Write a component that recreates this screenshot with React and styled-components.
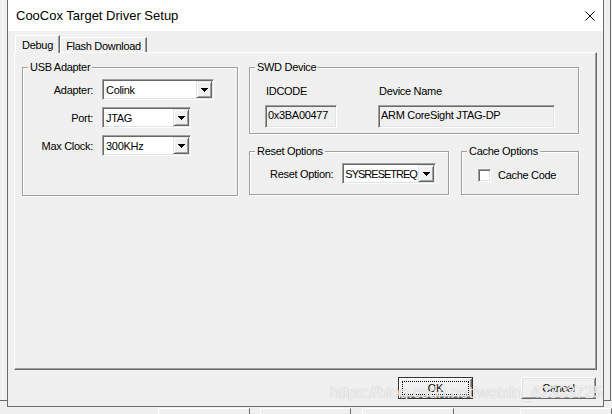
import React from "react";
import styled, { createGlobalStyle } from "styled-components";

const Global = createGlobalStyle`
  html, body { margin: 0; padding: 0; background: #f0f0f0; overflow: hidden; }
  body { font-family: "Liberation Sans", Arial, sans-serif; font-size: 11px; color: #000; }
  * { box-sizing: border-box; }
`;

const Screen = styled.div`
  position: relative;
  width: 612px;
  height: 414px;
  overflow: hidden;
  background: #f0f0f0;
`;

const BackWindow = styled.div`
  position: absolute;
  left: -10px;
  top: -10px;
  width: 621px;
  height: 411px;
  border-right: 1px solid #696969;
  border-bottom: 1px solid #696969;
  background: linear-gradient(to right, transparent 12px, #fbfbfb 12px, #fbfbfb 13px, transparent 13px), #f0f0f0;
`;

const BackBar = styled.div`
  position: absolute;
  left: 0;
  top: 408px;
  display: flex;
`;

const BackSlot = styled.div`
  width: ${(p) => p.$w}px;
  margin-left: ${(p) => p.$ml}px;
  height: 10px;
  background: #f0f0f0;
  border-top: 1px solid #fff;
  border-left: 1px solid #fff;
  border-right: 1px solid #696969;
`;

const Dialog = styled.div`
  position: absolute;
  left: 7px;
  top: -1px;
  width: 597px;
  height: 408px;
  border: 1px solid #6c6c6c;
  background: #f0f0f0;
  display: flex;
  flex-direction: column;
  z-index: 1;
`;

const TitleBar = styled.div`
  height: 31px;
  flex: none;
  background: #fff;
  display: flex;
  align-items: center;
  justify-content: space-between;
  padding: 0 8px;
`;

const Title = styled.span`
  font-size: 13px;
  line-height: 31px;
  color: #000;
`;

const CloseIcon = styled.svg`
  display: block;
  width: 10px;
  height: 10px;
`;

const Body = styled.div`
  flex: 1;
  display: flex;
  flex-direction: column;
  padding: 4px 6px 0 6px;
  letter-spacing: -0.3px;
`;

const TabStrip = styled.div`
  display: flex;
  align-items: flex-end;
  height: 17px;
  padding-left: 1px;
`;

const Tab = styled.div`
  position: relative;
  z-index: ${(p) => (p.$active ? 1 : 0)};
  width: ${(p) => p.$w}px;
  height: ${(p) => (p.$active ? 18 : 15)}px;
  margin-bottom: ${(p) => (p.$active ? -1 : 0)}px;
  padding-top: ${(p) => (p.$active ? 3 : 2)}px;
  border-top: 1px solid #fff;
  border-left: 1px solid #fff;
  border-right: 1px solid #696969;
  box-shadow: inset -1px 0 #a0a0a0;
  background: #f0f0f0;
  line-height: 13px;
  text-align: center;
`;

const TabPanel = styled.div`
  height: 318px;
  flex: none;
  border: 1px solid;
  border-color: #fff #696969 #696969 #fff;
  box-shadow: inset -1px -1px #a0a0a0;
  padding: 14px 0 0 7px;
`;

const Columns = styled.div`
  display: grid;
  grid-template-columns: 216px 330px;
  column-gap: 11px;
  align-items: start;
`;

const RightColumn = styled.div`
  display: flex;
  flex-direction: column;
  gap: 17px;
`;

const OptionRow = styled.div`
  display: flex;
  gap: 12px;
`;

const Group = styled.div`
  position: relative;
  width: ${(p) => p.$w}px;
  height: ${(p) => p.$h}px;
  border: 1px solid #a0a0a0;
  box-shadow: inset 1px 1px #fff, 1px 1px 0 #fff;
`;

const GroupTitle = styled.span`
  position: absolute;
  top: -7px;
  left: 5px;
  padding: 0 2px;
  line-height: 13px;
  background: #f0f0f0;
  white-space: nowrap;
`;

const FormGrid = styled.div`
  display: grid;
  grid-template-columns: 70px auto;
  column-gap: 9px;
  row-gap: 7px;
  justify-items: start;
  padding-top: 11px;
`;

const Label = styled.span`
  justify-self: end;
  height: 21px;
  line-height: 23px;
  white-space: nowrap;
`;

const Combo = styled.div`
  display: flex;
  width: ${(p) => p.$w}px;
  height: 21px;
  padding: 1px;
  background: #fff;
  border: 1px solid;
  border-color: #a0a0a0 #fff #fff #a0a0a0;
  box-shadow: inset 1px 1px #696969, inset -1px -1px #e3e3e3;
`;

const ComboValue = styled.span`
  flex: 1;
  min-width: 0;
  height: 17px;
  line-height: 19px;
  padding-left: ${(p) => (p.$tight ? 1 : 2)}px;
  letter-spacing: ${(p) => (p.$tight ? "-1px" : "inherit")};
  overflow: hidden;
  white-space: nowrap;
`;

const DropButton = styled.div`
  width: 16px;
  height: 17px;
  flex: none;
  display: flex;
  align-items: center;
  justify-content: center;
  background: #f0f0f0;
  border: 1px solid;
  border-color: #e3e3e3 #696969 #696969 #e3e3e3;
  box-shadow: inset 1px 1px #fff, inset -1px -1px #a0a0a0;
`;

const Arrow = styled.svg`
  display: block;
  width: 7px;
  height: 4px;
  margin-top: 1px;
  shape-rendering: crispEdges;
`;

const SwdGrid = styled.div`
  display: grid;
  grid-template-columns: 72px 177px;
  column-gap: 41px;
  row-gap: 7px;
  padding: 17px 0 0 15px;
`;

const FieldLabel = styled.span`
  line-height: 13px;
  padding-left: 1px;
  white-space: nowrap;
`;

const ReadOnlyBox = styled.div`
  height: 23px;
  padding: 1px 0 0 2px;
  background: #f0f0f0;
  border: 1px solid;
  border-color: #a0a0a0 #fff #fff #a0a0a0;
  box-shadow: inset 1px 1px #696969, inset -1px -1px #e3e3e3;
  line-height: 17px;
  white-space: nowrap;
  overflow: hidden;
`;

const InlineRow = styled.div`
  display: flex;
  align-items: ${(p) => (p.$center ? "center" : "flex-start")};
  gap: ${(p) => p.$gap}px;
  padding: ${(p) => p.$pad};
`;

const CheckBox = styled.span`
  display: block;
  width: 13px;
  height: 13px;
  background: #fff;
  border: 1px solid;
  border-color: #a0a0a0 #fff #fff #a0a0a0;
  box-shadow: inset 1px 1px #696969, inset -1px -1px #e3e3e3;
`;

const CheckLabel = styled.span`
  line-height: 13px;
  white-space: nowrap;
`;

const Footer = styled.div`
  display: flex;
  justify-content: flex-end;
  gap: 48px;
  padding: 7px 1px 0 0;
`;

const Button = styled.div`
  position: relative;
  width: 75px;
  height: 22px;
  text-align: center;
  line-height: 20px;
  background: #f0f0f0;
  border: 1px solid;
  border-color: ${(p) => (p.$primary ? "#333 #333 #333 #333" : "#fff #696969 #696969 #fff")};
  box-shadow: ${(p) =>
    p.$primary
      ? "inset 1px 1px #fff, inset -1px -1px #696969, inset -2px -2px #a0a0a0"
      : "inset 1px 1px #e3e3e3, inset -1px -1px #a0a0a0"};
  ${(p) =>
    p.$primary &&
    `&::after {
      content: "";
      position: absolute;
      left: 3px; top: 3px; right: 3px; bottom: 3px;
      border: 1px dotted #000;
    }`}
`;

const Watermark = styled.div`
  position: absolute;
  left: 330px;
  top: 384px;
  z-index: 2;
  font-family: "Liberation Sans", Arial, sans-serif;
  font-size: 16px;
  white-space: nowrap;
  color: rgba(255, 255, 255, 0.85);
  text-shadow: 0 0 1px rgba(110, 110, 110, 0.55);
  pointer-events: none;
`;

function DropArrow() {
  return (
    <DropButton>
      <Arrow viewBox="0 0 7 4">
        <path d="M0 0H7V1H6V2H5V3H4V4H3V3H2V2H1V1H0Z" fill="#000" />
      </Arrow>
    </DropButton>
  );
}

function ComboBox({ value, width, tight }) {
  return (
    <Combo $w={width}>
      <ComboValue $tight={tight}>{value}</ComboValue>
      <DropArrow />
    </Combo>
  );
}

export default function App() {
  return (
    <Screen>
      <Global />
      <BackWindow />
      <BackBar>
        <BackSlot $ml={158} $w={92} />
        <BackSlot $ml={10} $w={91} />
        <BackSlot $ml={11} $w={92} />
        <BackSlot $ml={66} $w={92} />
      </BackBar>
      <Dialog>
        <TitleBar>
          <Title>CooCox Target Driver Setup</Title>
          <CloseIcon viewBox="0 0 10 10">
            <path d="M0.5 0.5L9.5 9.5M9.5 0.5L0.5 9.5" stroke="#000" strokeWidth="1" fill="none" />
          </CloseIcon>
        </TitleBar>
        <Body>
          <TabStrip>
            <Tab $active $w={45}>Debug</Tab>
            <Tab $w={87}>Flash Download</Tab>
          </TabStrip>
          <TabPanel>
            <Columns>
              <Group $w={216} $h={129}>
                <GroupTitle>USB Adapter</GroupTitle>
                <FormGrid>
                  <Label>Adapter:</Label>
                  <ComboBox value="Colink" width={112} />
                  <Label>Port:</Label>
                  <ComboBox value="JTAG" width={89} />
                  <Label>Max Clock:</Label>
                  <ComboBox value="300KHz" width={89} />
                </FormGrid>
              </Group>
              <RightColumn>
                <Group $w={330} $h={67}>
                  <GroupTitle>SWD Device</GroupTitle>
                  <SwdGrid>
                    <FieldLabel>IDCODE</FieldLabel>
                    <FieldLabel>Device Name</FieldLabel>
                    <ReadOnlyBox>0x3BA00477</ReadOnlyBox>
                    <ReadOnlyBox>ARM CoreSight JTAG-DP</ReadOnlyBox>
                  </SwdGrid>
                </Group>
                <OptionRow>
                  <Group $w={200} $h={44}>
                    <GroupTitle>Reset Options</GroupTitle>
                    <InlineRow $gap={9} $pad="11px 0 0 20px">
                      <Label>Reset Option:</Label>
                      <ComboBox value="SYSRESETREQ" width={94} tight />
                    </InlineRow>
                  </Group>
                  <Group $w={118} $h={44}>
                    <GroupTitle>Cache Options</GroupTitle>
                    <InlineRow $center $gap={7} $pad="17px 0 0 16px">
                      <CheckBox />
                      <CheckLabel>Cache Code</CheckLabel>
                    </InlineRow>
                  </Group>
                </OptionRow>
              </RightColumn>
            </Columns>
          </TabPanel>
          <Footer>
            <Button $primary>OK</Button>
            <Button>Cancel</Button>
          </Footer>
        </Body>
      </Dialog>
      <Watermark>https://blog.csdn.net/weixin_42303725</Watermark>
    </Screen>
  );
}
